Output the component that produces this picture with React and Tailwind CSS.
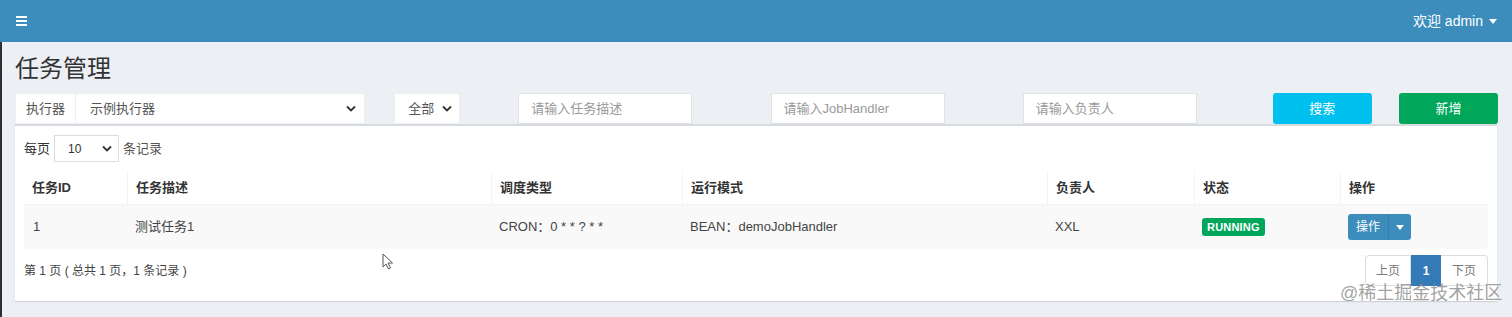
import React from 'react'

const font = { fontFamily: '"Liberation Sans", "Noto Sans CJK SC", sans-serif' }

const Caret = ({ className = '' }) => (
  <svg className={className} width="8" height="5" viewBox="0 0 8 5" fill="currentColor">
    <path d="M0 0h8L4 5z" />
  </svg>
)

const Chevron = () => (
  <svg width="10" height="7" viewBox="0 0 10 7" fill="none" stroke="#333" strokeWidth="1.8">
    <path d="M1 1.5l4 4 4-4" />
  </svg>
)

const columns = [
  { title: '任务ID', w: 'w-[103px]' },
  { title: '任务描述', w: 'w-[364px]' },
  { title: '调度类型', w: 'w-[191px]' },
  { title: '运行模式', w: 'w-[365px]' },
  { title: '负责人', w: 'w-[147px]' },
  { title: '状态', w: 'w-[146px]' },
  { title: '操作', w: 'flex-1' },
]

const App = () => {
  return (
    <div className="relative w-[1512px] h-[317px] overflow-hidden bg-[#ecf0f5] text-[13px] text-[#333]" style={font}>
      {/* Top bar */}
      <header className="h-[42px] bg-[#3c8dbc] flex items-center justify-between pl-[16px] pr-[15px] text-white">
        <div className="flex flex-col gap-[2px] w-[11px]">
          <span className="h-[2px] bg-white" />
          <span className="h-[2px] bg-white" />
          <span className="h-[2px] bg-white" />
        </div>
        <div className="flex items-center gap-[6px] text-[14px]">
          <span>欢迎 admin</span>
          <Caret />
        </div>
      </header>

      <div className="flex">
        <div className="w-[3px] bg-[#2a2f33] h-[275px]" />
        <main className="flex-1">
          <h1 className="pl-[13px] pt-[12px] text-[24px] leading-[30px] text-[#333]">任务管理</h1>

          {/* Filters */}
          <div className="grid grid-cols-12 mt-[9px] ml-[-3px] h-[31px]">
            <div className="col-span-3 px-[16px] pr-[12px] flex">
              <div className="w-[61px] h-[31px] bg-white border border-[#eee] flex items-center justify-center text-[#555]">执行器</div>
              <div className="flex-1 h-[31px] bg-white border border-l-0 border-[#eee] flex items-center justify-between pl-[14px] pr-[8px] text-[#555]">
                <span>示例执行器</span>
                <Chevron />
              </div>
            </div>
            <div className="col-span-1 px-[17px]">
              <div className="w-[66px] h-[31px] bg-white border border-[#eee] flex items-center justify-between pl-[13px] pr-[7px] text-[#555]">
                <span>全部</span>
                <Chevron />
              </div>
            </div>
            {['请输入任务描述', '请输入JobHandler', '请输入负责人'].map(p => (
              <div key={p} className="col-span-2 px-[15px]">
                <div className="w-[174px] h-[31px] bg-white border border-[#e3e3e3] flex items-center pl-[12px] text-[#999]">{p}</div>
              </div>
            ))}
            <div className="col-span-1 pl-[13px] pr-[14px]">
              <div className="h-[31px] rounded-[3px] bg-[#00c0ef] text-white flex items-center justify-center">搜索</div>
            </div>
            <div className="col-span-1 pl-[13px] pr-[14px]">
              <div className="h-[31px] rounded-[3px] bg-[#00a65a] text-white flex items-center justify-center">新增</div>
            </div>
          </div>

          {/* Box */}
          <div className="ml-[13px] mr-[15px] bg-white border-t-[2px] border-[#d6dbe2] shadow-[0_1px_1px_rgba(0,0,0,0.12)] h-[177px] px-[9px] pt-[9px]">
            <div className="flex items-center gap-[4px] h-[27px]">
              <span>每页</span>
              <div className="w-[65px] h-[27px] border border-[#ddd] flex items-center justify-between pl-[13px] pr-[6px] text-[12px]">
                <span>10</span>
                <Chevron />
              </div>
              <span className="text-[#555]">条记录</span>
            </div>

            <div className="mt-[9px] w-[1464px]">
              <div className="flex h-[34px] border-b border-[#f4f4f4] bg-white font-bold">
                {columns.map(c => (
                  <div key={c.title} className={`${c.w} border-l border-[#f4f4f4] first:border-l-0 flex items-center pl-[8px]`}>{c.title}</div>
                ))}
              </div>
              <div className="flex h-[44px] bg-[#f9f9f9] text-[#444]">
                <div className="w-[103px] flex items-center pl-[9px]">1</div>
                <div className="w-[364px] flex items-center pl-[8px]">测试任务1</div>
                <div className="w-[191px] flex items-center pl-[8px]">CRON：0 * * ? * *</div>
                <div className="w-[365px] flex items-center pl-[8px]">BEAN：demoJobHandler</div>
                <div className="w-[147px] flex items-center pl-[8px]">XXL</div>
                <div className="w-[146px] flex items-center pl-[8px]">
                  <span className="bg-[#00a65a] text-white text-[11px] font-bold px-[5px] h-[18px] leading-[18px] rounded-[3px] tracking-[0.2px]">RUNNING</span>
                </div>
                <div className="flex-1 flex items-center pl-[8px]">
                  <div className="flex h-[26px] rounded-[3px] bg-[#3c8dbc] text-white text-[12px]">
                    <span className="w-[41px] flex items-center justify-center border-r border-[#367fa9]">操作</span>
                    <span className="w-[22px] flex items-center justify-center"><Caret /></span>
                  </div>
                </div>
              </div>
            </div>

            <div className="flex items-center justify-between mt-[6px] w-[1464px]">
              <span className="text-[12px] text-[#444]">第 1 页 ( 总共 1 页，1 条记录 )</span>
              <div className="flex h-[31px] text-[12px]">
                <span className="w-[46px] border border-[#ddd] rounded-l-[4px] flex items-center justify-center text-[#777]">上页</span>
                <span className="w-[30px] bg-[#337ab7] text-white font-bold flex items-center justify-center">1</span>
                <span className="w-[47px] border border-[#ddd] border-l-0 rounded-r-[4px] flex items-center justify-center text-[#777]">下页</span>
              </div>
            </div>
          </div>
        </main>
      </div>

      {/* Mouse cursor */}
      <svg className="absolute left-[382px] top-[253px]" width="12" height="17" viewBox="0 0 12 17">
        <path d="M1 1v13l3-3 2.5 5 2-1-2.5-5h4.5z" fill="#fff" stroke="#555" strokeWidth="1" />
      </svg>

      {/* Watermark */}
      <div className="absolute left-[1340px] top-[281px] whitespace-nowrap text-[18px] leading-[24px] text-[#8a8a8a]/80" style={font}>@稀土掘金技术社区</div>
    </div>
  )
}

export default App
